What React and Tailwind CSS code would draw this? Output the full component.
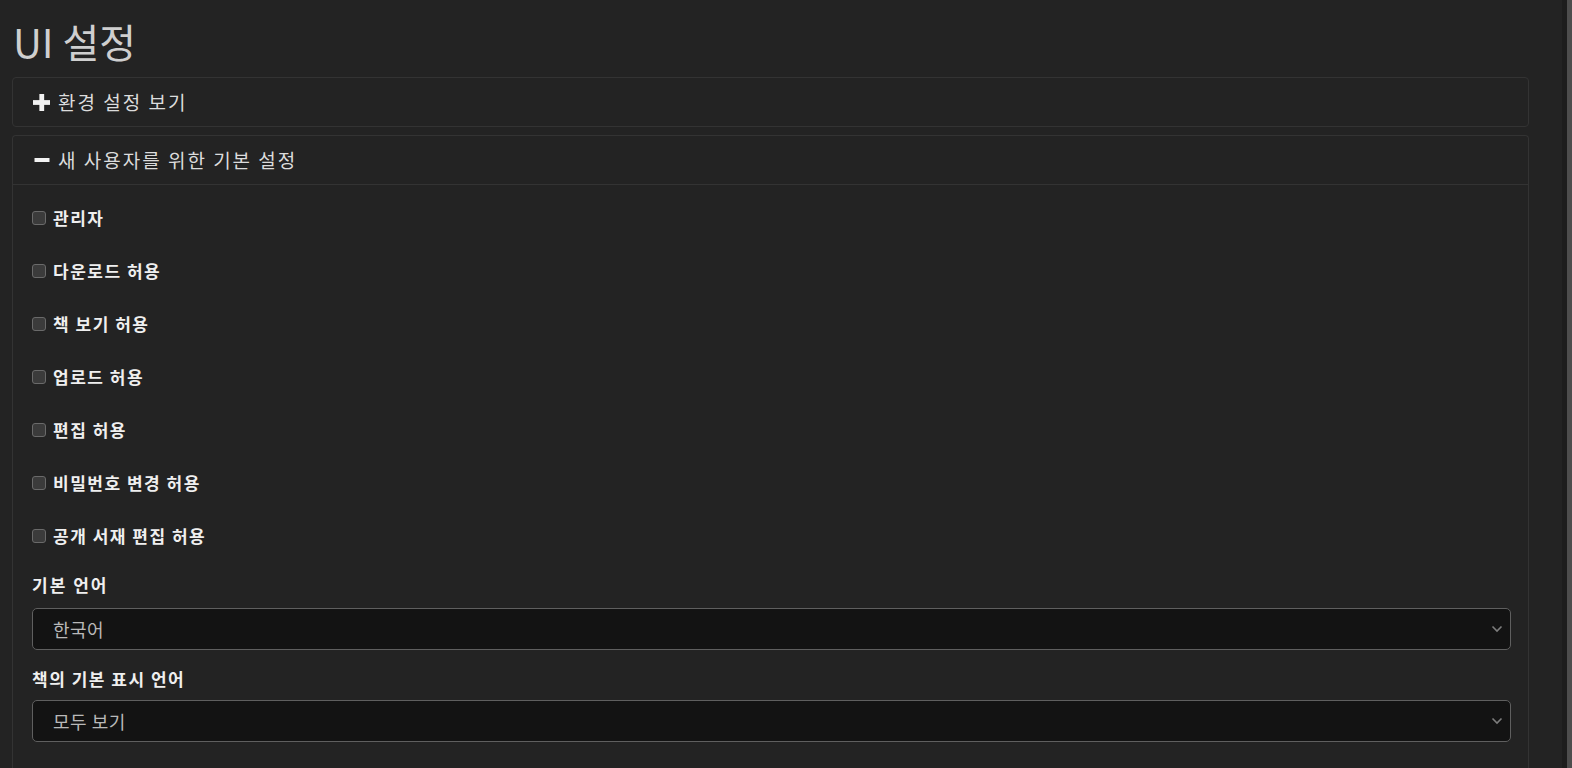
import React from 'react'

const font = { fontFamily: '"Noto Sans CJK KR", "Noto Sans", sans-serif' }

const permissions = [
  '관리자',
  '다운로드 허용',
  '책 보기 허용',
  '업로드 허용',
  '편집 허용',
  '비밀번호 변경 허용',
  '공개 서재 편집 허용',
]

function PlusIcon() {
  return (
    <svg width="17" height="17" viewBox="0 0 16 16" aria-hidden="true">
      <rect x="6" y="0" width="4.5" height="16" fill="#f2f2f2" />
      <rect x="0" y="5.75" width="16" height="4.5" fill="#f2f2f2" />
    </svg>
  )
}

function MinusIcon() {
  return (
    <svg width="17" height="16" viewBox="0 0 16 16" aria-hidden="true">
      <rect x="1" y="6" width="15" height="4" fill="#f2f2f2" />
    </svg>
  )
}

function FakeSelect({ value }) {
  return (
    <div className="flex h-[42px] items-center justify-between rounded-[5px] border border-[#5f5f5f] bg-[#131313] pl-[20px] pr-[7px]">
      <span className="text-[18px] tracking-[0.5px] text-[#b9b9b9]">{value}</span>
      <svg width="12" height="8" viewBox="0 0 12 8" fill="none" aria-hidden="true">
        <path d="M1.5 1.5 6 6l4.5-4.5" stroke="#7d7d7d" strokeWidth="1.6" />
      </svg>
    </div>
  )
}

export default function App() {
  return (
    <div className="flex h-[768px] overflow-hidden bg-[#232323]" style={font}>
      <div className="w-[1562px] pl-[12px]">
        <h1 className="pt-[19px] pl-[1px] text-[40px] leading-[44px] font-normal text-[#cfcfcf]">UI 설정</h1>

        <div className="mt-[14px] w-[1517px]">
          {/* collapsed panel */}
          <div className="rounded-[4px] border border-[#333333] bg-[#232323]">
            <div className="flex h-[48px] items-center gap-[8px] pl-[20px]">
              <PlusIcon />
              <span className="text-[19px] tracking-[2px] text-[#dcdcdc]">환경 설정 보기</span>
            </div>
          </div>

          {/* expanded panel */}
          <div className="mt-[8px] rounded-t-[4px] border border-b-0 border-[#333333] bg-[#232323]">
            <div className="flex h-[49px] items-center gap-[8px] border-b border-[#333333] pl-[20px]">
              <MinusIcon />
              <span className="text-[19px] tracking-[2px] text-[#dcdcdc]">새 사용자를 위한 기본 설정</span>
            </div>
            <div className="pl-[19px] pr-[17px] pt-[23px] pb-[40px]">
              <div className="flex flex-col gap-[33px]">
                {permissions.map(p => (
                  <label key={p} className="flex h-[20px] items-center gap-[7px]">
                    <span className="h-[14px] w-[14px] rounded-[3px] border border-[#6a6a6a] bg-[#3b3b3b]" />
                    <span className="text-[17px] font-bold tracking-[1.5px] text-[#efefef]">{p}</span>
                  </label>
                ))}
              </div>

              <div className="mt-[29px] flex h-[20px] items-center text-[17px] font-bold tracking-[2px] text-[#efefef]">기본 언어</div>
              <div className="mt-[13px]">
                <FakeSelect value="한국어" />
              </div>

              <div className="mt-[19px] flex h-[20px] items-center text-[17px] font-bold tracking-[1.5px] text-[#efefef]">책의 기본 표시 언어</div>
              <div className="mt-[11px]">
                <FakeSelect value="모두 보기" />
              </div>
            </div>
          </div>
        </div>
      </div>

      {/* scrollbar */}
      <div className="flex w-[10px]">
        <div className="w-[5px] bg-[#1d1d1d]" />
        <div className="w-[5px] bg-[#4d4d4d]" />
      </div>
    </div>
  )
}
